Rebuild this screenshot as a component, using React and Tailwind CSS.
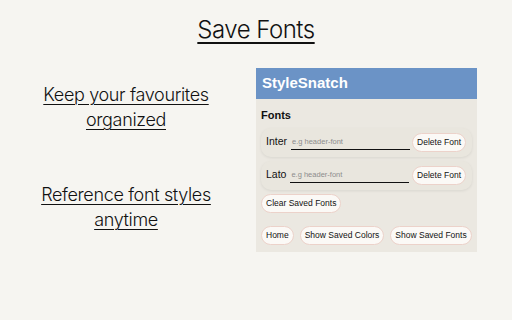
export default function App() {
  const sans = { fontFamily: '"Liberation Sans", Arial, sans-serif' };

  const pill =
    'rounded-full border border-[#ecd2ca] bg-[#fbf9f6] px-[4px] h-[19px] text-[8.5px] text-[#111] flex items-center';

  const FontRow = ({ name }) => (
    <div className="flex items-center h-[29px] rounded-[10px] bg-[#e9e6de] shadow-[0_1px_3px_rgba(0,0,0,0.08)] pl-[5px] pr-[6px]">
      <span className="text-[10.5px] text-[#111] mr-[4px]">{name}</span>
      <div className="w-[119px] border-b border-[#111] h-[15px] flex items-center text-[7.5px] text-[#8d8d8d] pl-[1px]">
        e.g header-font
      </div>
      <div className="flex-1" />
      <button className={pill}>Delete Font</button>
    </div>
  );

  return (
    <div
      className="w-[512px] h-[320px] bg-[#f6f5f1] text-[#111] overflow-hidden"
      style={{ fontFamily: 'Inter, "Noto Sans", sans-serif' }}
    >
      <div className="pt-[14px] text-center text-[24px] leading-[32px] font-light tracking-[-0.5px] underline underline-offset-[4px] decoration-[1.5px]">
        Save Fonts
      </div>

      <div className="flex mt-[22px]">
        <div className="w-[252px] flex flex-col items-center text-[18px] leading-[25px] font-light tracking-[-0.35px] underline underline-offset-[3px] decoration-[1px] text-center">
          <div className="mt-[14px]">
            Keep your favourites
            <br />
            organized
          </div>
          <div className="mt-[50px]">
            Reference font styles
            <br />
            anytime
          </div>
        </div>

        <div className="ml-[4px] w-[221px] h-[184px] bg-[#ebe8e1]" style={sans}>
          <div className="h-[31px] bg-[#6b93c6] flex items-center pl-[6px] text-white text-[15px] font-bold">
            StyleSnatch
          </div>
          <div className="px-[5px]">
            <div className="mt-[8px] text-[11px] font-bold">Fonts</div>
            <div className="mt-[4px] flex flex-col gap-[4px]">
              <FontRow name="Inter" />
              <FontRow name="Lato" />
            </div>
            <div className="mt-[4px] flex">
              <button className={pill}>Clear Saved Fonts</button>
            </div>
            <div className="mt-[13px] flex gap-[6px]">
              <button className={pill}>Home</button>
              <button className={pill}>Show Saved Colors</button>
              <button className={pill}>Show Saved Fonts</button>
            </div>
          </div>
        </div>
      </div>
    </div>
  );
}
